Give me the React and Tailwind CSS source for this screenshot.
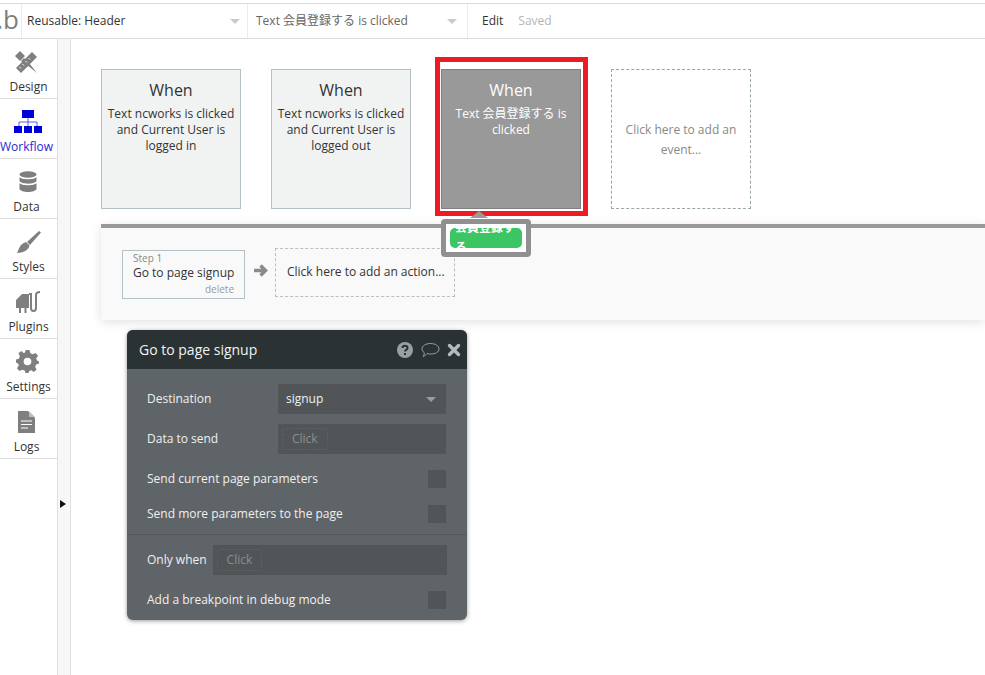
import React from "react";

const FONT = "font-['Open_Sans','Noto_Sans_CJK_JP',sans-serif]";

function DesignIcon() {
  return (
    <svg width="24" height="24" viewBox="0 0 24 24" fill="#7f7f7f">
      <path d="M1 6 L6 1 L11 6 L6 11 Z" />
      <path d="M13 15 L15 13 L23 23 Z" />
      <path d="M10 8 L16 14 L13 17 L7 11 Z" />
      <path d="M18 2 L23 7 L7 23 L2 18 Z" />
      <path d="M14.5 8 L16 9.5 M11.5 11 L13 12.5 M8.5 14 L10 15.5 M5.5 17 L7 18.5" stroke="#fff" strokeWidth="1" />
    </svg>
  );
}

function WorkflowIcon() {
  return (
    <svg width="28" height="24" viewBox="0 0 28 24">
      <rect x="8" y="0" width="12" height="8" fill="#0000d8" />
      <path d="M14 8 V12 M5 16 V12 H23 V16 M14 12 V16" stroke="#5a5ae0" strokeWidth="1" fill="none" />
      <rect x="0" y="16" width="8" height="7" fill="#0000d8" />
      <rect x="10" y="16" width="8" height="7" fill="#0000d8" />
      <rect x="20" y="16" width="8" height="7" fill="#0000d8" />
    </svg>
  );
}

function DataIcon() {
  return (
    <svg width="18" height="22" viewBox="0 0 18 22" fill="#7f7f7f">
      <ellipse cx="9" cy="3.5" rx="8.5" ry="3.2" />
      <path d="M0.5 6 C2 9 16 9 17.5 6 V10 C16 13.5 2 13.5 0.5 10 Z" />
      <path d="M0.5 12 C2 15 16 15 17.5 12 V18 C16 22 2 22 0.5 18 Z" />
    </svg>
  );
}

function StylesIcon() {
  return (
    <svg width="24" height="22" viewBox="0 0 24 22" fill="#7f7f7f">
      <path d="M22 0 L24 1.5 L13 14 L10 11 Z" />
      <path d="M9 11 L12.5 14.5 C12 19 6 22 0 22 C2 19 2 13 9 11 Z" />
    </svg>
  );
}

function PluginsIcon() {
  return (
    <svg width="24" height="22" viewBox="0 0 24 22" fill="none">
      <path d="M3 6 L6 3 H13 V17 H10.5 V22 H8.5 V17 H5 V22 H3 V17 H0 V9 Z" fill="#7f7f7f" />
      <path d="M13 3 H15 V17 C15 21 20 21 20 17 V4 C20 1 22 1 24 1" stroke="#7f7f7f" strokeWidth="2" />
    </svg>
  );
}

function SettingsIcon() {
  return (
    <svg width="23" height="23" viewBox="0 0 24 24" fill="#7f7f7f">
      <path d="M10 0 H14 L15 3.5 L17.5 4.5 L20.5 3 L23 6 L21 8.8 L22 11 L24 12 V14 L21 15 L20 17.5 L21.5 20.5 L18.5 23 L16 21 L14 22 L13 24 H10 L9 21.5 L6.5 20.7 L3.5 22 L1 19 L3 16 L2 14 L0 13 V10 L3 9 L4 6.5 L2.5 3.5 L5.5 1 L8 3 L9.5 2.5 Z M12 8 A4 4 0 1 0 12 16 A4 4 0 1 0 12 8 Z" fillRule="evenodd" />
    </svg>
  );
}

function LogsIcon() {
  return (
    <svg width="17" height="22" viewBox="0 0 17 22">
      <path d="M0 0 H10 L17 7 V22 H0 Z" fill="#7f7f7f" />
      <path d="M11 0 L17 6 H11 Z" fill="#bdbdbd" />
      <path d="M3 10 H14 M3 13.5 H14 M3 17 H10" stroke="#fff" strokeWidth="1.2" />
    </svg>
  );
}

const navItems = [
  { label: "Design", Icon: DesignIcon, iconClass: "mr-1.5" },
  { label: "Workflow", Icon: WorkflowIcon, active: true, labelClass: "mr-1", iconClass: "mr-0.5" },
  { label: "Data", Icon: DataIcon, labelClass: "mr-1", iconClass: "mr-0.5" },
  { label: "Styles", Icon: StylesIcon },
  { label: "Plugins", Icon: PluginsIcon, iconClass: "mr-0.5" },
  { label: "Settings", Icon: SettingsIcon, iconClass: "mr-0.5" },
  { label: "Logs", Icon: LogsIcon, labelClass: "mr-1", iconClass: "mr-1" },
];

function Caret({ color = "#c3ccd1" }) {
  return (
    <svg width="10" height="5" viewBox="0 0 10 5">
      <path d="M0 0 H10 L5 5 Z" fill={color} />
    </svg>
  );
}

function TopBar() {
  return (
    <div className="flex h-[36px] mt-[3px] border-t border-b border-[#dcdcdc] bg-white text-xs text-[#444]">
      <div className="w-[22px] shrink-0 border-r border-[#e8eced] overflow-hidden flex items-center justify-end pr-0.5">
        <span className="text-[26px] leading-none text-[#7d7d7d] font-medium -mt-1">.b</span>
      </div>
      <div className="w-[226px] shrink-0 border-r border-[#e8eced] flex items-center justify-between pl-[5px] pr-[7px]">
        <span className="text-[#333]">Reusable: Header</span>
        <Caret />
      </div>
      <div className="w-[220px] shrink-0 border-r border-[#e8eced] flex items-center justify-between pl-2 pr-[10px]">
        <span className="text-[#666]">Text 会員登録する is clicked</span>
        <Caret />
      </div>
      <div className="flex items-center pl-[14px] gap-[15px]">
        <span className="text-[#333]">Edit</span>
        <span className="text-[#b5b5b5]">Saved</span>
      </div>
    </div>
  );
}

function Sidebar() {
  return (
    <div className="flex shrink-0">
      <div className="w-[57px] bg-white">
        {navItems.map(({ label, Icon, active, labelClass, iconClass }) => (
          <div key={label} className="h-[60px] border-b border-[#dedede] flex flex-col items-center">
            <div className={"h-[41px] flex items-center justify-center pt-1 " + (iconClass || "")}>
              <Icon />
            </div>
            <span className={"text-xs leading-[14px] " + (active ? "text-[#2a2ad0] " : "text-[#333] ") + (labelClass || "")}>{label}</span>
          </div>
        ))}
      </div>
      <div className="w-[14px] bg-[#f7f7f7] border-l border-r border-[#dedede] relative">
        <svg className="absolute left-[2px] top-[461px]" width="6" height="8" viewBox="0 0 6 8">
          <path d="M0 0 L6 4 L0 8 Z" fill="#111" />
        </svg>
      </div>
    </div>
  );
}

function EventCard({ children, dark }) {
  return (
    <div
      className={
        "w-[140px] h-[140px] border flex flex-col items-center text-center px-0.5 pt-[8px] " +
        (dark ? "bg-[#999999] border-[#7f7f7f] text-white" : "bg-[#f1f3f3] border-[#b4c1c6] text-[#333]")
      }
    >
      <div className="text-base leading-6">When</div>
      <div className={"text-xs leading-4 mt-[4px] " + (dark ? "px-1" : "")}>{children}</div>
    </div>
  );
}

function DialogCheckRow({ label }) {
  return (
    <div className="flex items-center justify-between h-[35px] pl-5 pr-[21px]">
      <span className="text-xs text-[#f0f0f0]">{label}</span>
      <div className="w-[18px] h-[18px] bg-[#515558]" />
    </div>
  );
}

function ClickChip() {
  return (
    <span className="text-xs text-[#8b8f91] border border-dashed border-[#5c6063] rounded px-[9px] py-[2px]">Click</span>
  );
}

function Dialog() {
  return (
    <div className="w-[340px] h-[290px] ml-[26px] mt-[10px] rounded-md bg-[#5f6468] shadow-[0_1px_4px_rgba(0,0,0,0.4)] overflow-hidden">
      <div className="h-[39px] bg-[#2b3234] flex items-center justify-between pl-3 pr-[6px]">
        <span className="text-sm text-[#f2f2f2]">Go to page signup</span>
        <div className="flex items-center gap-[7px]">
          <svg className="mr-px" width="16" height="16" viewBox="0 0 16 16">
            <circle cx="8" cy="8" r="8" fill="#9a9fa2" />
            <path d="M5.5 6 C5.5 3 10.5 3 10.5 6 C10.5 8 8 7.8 8 9.6" stroke="#2b3234" strokeWidth="2" fill="none" />
            <rect x="7" y="11" width="2" height="2" fill="#2b3234" />
          </svg>
          <svg width="19" height="16" viewBox="0 0 19 16" fill="none">
            <path d="M9.5 1.5 C14.5 1.5 18 4 18 7 C18 10 14.5 12 9.5 12 C8 12 7 12 6 11.5 C5 13 3.5 14 2 14.5 C3 13 3.5 11.5 3.2 10.5 C1.5 9.5 1 8 1 7 C1 4 4.5 1.5 9.5 1.5 Z" stroke="#9a9fa2" strokeWidth="1" />
          </svg>
          <svg width="14" height="14" viewBox="0 0 14 14">
            <path d="M2.5 2.5 L11.5 11.5 M11.5 2.5 L2.5 11.5" stroke="#b5babc" strokeWidth="3.4" strokeLinecap="round" />
          </svg>
        </div>
      </div>
      <div className="pt-[15px]">
        <div className="flex items-center h-[30px] pl-5 pr-[21px] justify-between">
          <span className="text-xs text-[#f0f0f0]">Destination</span>
          <div className="w-[168px] h-[30px] bg-[#515558] flex items-center justify-between pl-2 pr-[10px]">
            <span className="text-xs text-[#f0f0f0]">signup</span>
            <Caret color="#999da0" />
          </div>
        </div>
        <div className="flex items-center h-[30px] mt-2.5 pl-5 pr-[21px] justify-between">
          <span className="text-xs text-[#f0f0f0]">Data to send</span>
          <div className="w-[168px] h-[30px] bg-[#515558] flex items-center pl-1">
            <ClickChip />
          </div>
        </div>
        <div className="mt-[7px]">
          <DialogCheckRow label="Send current page parameters" />
          <DialogCheckRow label="Send more parameters to the page" />
        </div>
        <div className="border-t border-[#55595c] mt-[3px] pt-[10px]">
          <div className="flex items-center h-[30px] pl-5 pr-5 gap-[6px]">
            <span className="text-xs text-[#f0f0f0]">Only when</span>
            <div className="flex-1 h-[30px] bg-[#515558] flex items-center pl-1">
              <ClickChip />
            </div>
          </div>
          <div className="mt-[7px]">
            <DialogCheckRow label="Add a breakpoint in debug mode" />
          </div>
        </div>
      </div>
    </div>
  );
}

function Canvas() {
  return (
    <div className="flex-1 min-w-0 relative pt-[30px] pl-[30px] overflow-hidden">
      <div className="flex gap-[30px]">
        <EventCard>Text ncworks is clicked and Current User is logged in</EventCard>
        <EventCard>Text ncworks is clicked and Current User is logged out</EventCard>
        <EventCard dark>Text 会員登録する is clicked</EventCard>
        <div className="w-[140px] h-[140px] border border-dashed border-[#9aa5aa] flex items-center justify-center text-center px-3 pt-0.5">
          <span className="text-xs leading-5 text-[#888]">Click here to add an event...</span>
        </div>
      </div>

      <div className="h-[96px] mt-[15px] border-t-4 border-[#999999] bg-[#f9f9f9] shadow-[0_2px_10px_rgba(0,0,0,0.12)] flex items-start gap-[30px] pl-[21px] pt-[20px]">
        <div className="relative w-[123px] h-[49px] mt-[2px] border border-[#b4c1c6] pl-[10px]">
          <div className="text-[10px] leading-3 text-[#888] mt-px">Step 1</div>
          <div className="text-xs leading-[17px] text-[#333]">Go to page signup</div>
          <div className="absolute right-[10px] bottom-[3px] text-[10px] leading-3 text-[#999]">delete</div>
          <svg className="absolute left-[130px] top-[12px]" width="15" height="15" viewBox="0 0 15 15">
            <path d="M1 7.5 H12 M7.5 2.5 L12.5 7.5 L7.5 12.5" stroke="#8a8a8a" strokeWidth="3.4" fill="none" />
          </svg>
        </div>
        <div className="w-[180px] h-[49px] border border-dashed border-[#b4c1c6] flex items-center pl-[11px] pb-0.5 text-xs text-[#333]">
          Click here to add an action...
        </div>
      </div>

      <Dialog />

      {/* selected event highlight */}
      <div className="absolute left-[364px] top-[18px] w-[153px] h-[159px] border-[5px] border-[#ed1c24]" />
      <div className="absolute left-[399px] top-[172px] w-0 h-0 border-l-[9px] border-r-[9px] border-b-[7px] border-l-transparent border-r-transparent border-b-[#999999]" />
      <div className="absolute left-[370px] top-[180px] w-[90px] h-[38px] bg-white border-[5px] border-[#909090] rounded-[4px] pl-[4px] pt-[4px]">
        <div className="w-[72px] h-[20px] bg-[#3bc663] rounded-[5px] overflow-hidden pl-[5px] text-xs font-bold leading-[20px] text-white">
          <div className="-mt-[10px]">会員登録する</div>
        </div>
      </div>
    </div>
  );
}

export default function App() {
  return (
    <div className={FONT + " w-[985px] h-[675px] bg-white overflow-hidden flex flex-col"}>
      <TopBar />
      <div className="flex flex-1 min-h-0">
        <Sidebar />
        <Canvas />
      </div>
    </div>
  );
}
